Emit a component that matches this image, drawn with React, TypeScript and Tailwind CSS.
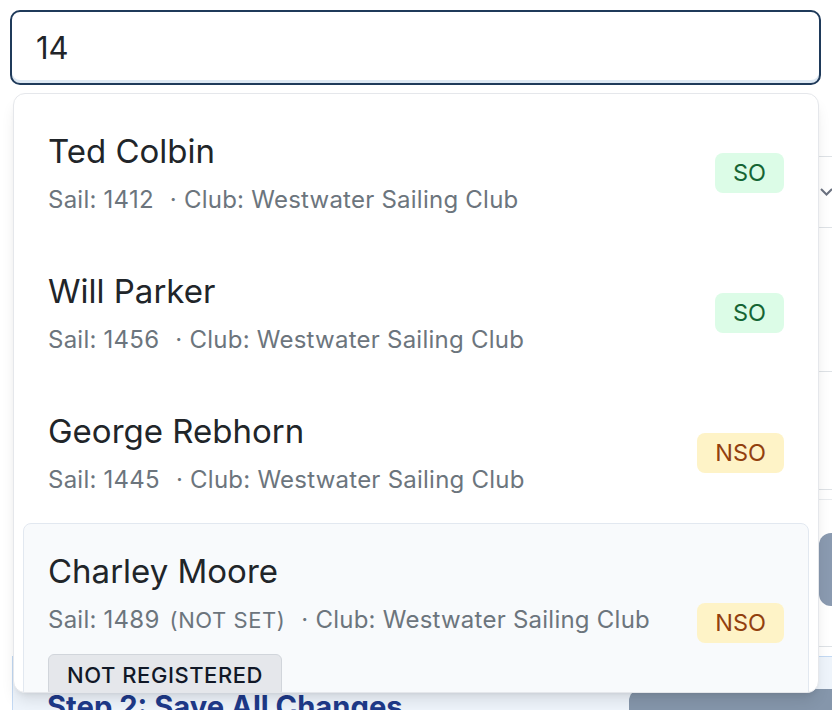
import clsx from 'clsx'

type Status = 'SO' | 'NSO'

interface Sailor {
  name: string
  sail: string
  club: string
  status: Status
  notSet?: boolean
  notRegistered?: boolean
  active?: boolean
}

const sailors: Sailor[] = [
  { name: 'Ted Colbin', sail: '1412', club: 'Westwater Sailing Club', status: 'SO' },
  { name: 'Will Parker', sail: '1456', club: 'Westwater Sailing Club', status: 'SO' },
  { name: 'George Rebhorn', sail: '1445', club: 'Westwater Sailing Club', status: 'NSO' },
  {
    name: 'Charley Moore',
    sail: '1489',
    club: 'Westwater Sailing Club',
    status: 'NSO',
    notSet: true,
    notRegistered: true,
    active: true,
  },
]

function StatusBadge({ status }: { status: Status }) {
  return (
    <span
      className={clsx(
        'shrink-0 rounded-lg px-[18px] py-[5px] text-[23.5px] leading-[30px]',
        status === 'SO' ? 'bg-[#dcfce7] text-[#166534]' : 'bg-[#fef3c7] text-[#92400e]',
      )}
    >
      {status}
    </span>
  )
}

function SailorOption({ s }: { s: Sailor }) {
  return (
    <div
      className={clsx(
        'flex items-center justify-between rounded-lg border px-6 pb-[26px] pt-[25px]',
        s.active ? 'border-[#e2e8f0] bg-[#f8fafc]' : 'border-transparent',
      )}
    >
      <div className="flex flex-col">
        <div className="text-[33px] leading-[45px] text-[#212529]">{s.name}</div>
        <div className="mt-[9px] text-[24px] leading-[33px] tracking-[0.01em] text-[#6c757d]">
          <span>Sail: {s.sail}</span>
          {s.notSet && (
            <span className="ml-[10px] text-[22px] tracking-wide">(NOT SET)</span>
          )}
          <span className="ml-[16px]">· Club: {s.club}</span>
        </div>
        {s.notRegistered && (
          <div className="mt-[17px]">
            <span className="inline-block rounded-md border border-[#d1d5db] bg-[#e5e7eb] px-[18px] py-[5px] text-[22px] font-medium leading-[30px] tracking-wide text-[#111827]">
              NOT REGISTERED
            </span>
          </div>
        )}
      </div>
      <StatusBadge status={s.status} />
    </div>
  )
}

export default function App() {
  return (
    <div className="relative h-[710px] w-[832px] overflow-hidden bg-white font-['Inter',sans-serif]">
      <div className="px-[10px] pt-[10px]">
        <input
          readOnly
          value="14"
          className="h-[75px] w-[811px] rounded-[10px] border-2 border-[#1f3a5a] bg-white pl-[24px] text-[31px] text-[#212529] shadow-[inset_0_-3px_0_#dde8f3] outline-none"
        />
      </div>

      {/* page underneath the open dropdown */}
      <div className="w-[860px] pl-[10px]">
        <div className="ml-[20px]">
          <div className="mt-[71px] flex h-[72px] items-center justify-end rounded-lg border border-[#dee2e6] pr-[26px]">
            <svg width="13" height="8" viewBox="0 0 13 8" fill="none" stroke="#6b7280" strokeWidth="2">
              <path d="M1 1l5.5 5.5L12 1" />
            </svg>
          </div>
          <div className="h-[144px] border-b border-[#dee2e6]" />
          <div className="h-[118px] border-b border-[#dee2e6]" />
          <div className="h-[10px] border-b border-[#e9ecef]" />
          <div className="mt-[33px] flex justify-end">
            <div className="h-[73px] w-[41px] rounded-l-xl bg-[#8a9ab0]" />
          </div>
          <div className="h-[41px] border-b border-[#dee2e6]" />
        </div>
        <div className="ml-[2px] mt-[9px] border-l border-t border-[#c3d9f3] bg-[#eef4fb]">
          <div className="flex items-start justify-between pl-[34px] pt-[29px]">
            <h2 className="text-[29.2px] font-bold leading-[42px] text-[#1e3a8a]">
              Step 2: Save All Changes
            </h2>
            <div className="mt-[3px] h-[60px] w-[231px] rounded-l-xl bg-[#8596ab]" />
          </div>
        </div>
      </div>

      {/* autocomplete dropdown */}
      <div className="absolute left-[13px] top-[93px] h-[600px] w-[806px] overflow-hidden rounded-xl border border-[#e5e7eb] bg-white p-[9px] shadow-lg">
        {sailors.map((s) => (
          <SailorOption key={s.name} s={s} />
        ))}
      </div>
    </div>
  )
}
